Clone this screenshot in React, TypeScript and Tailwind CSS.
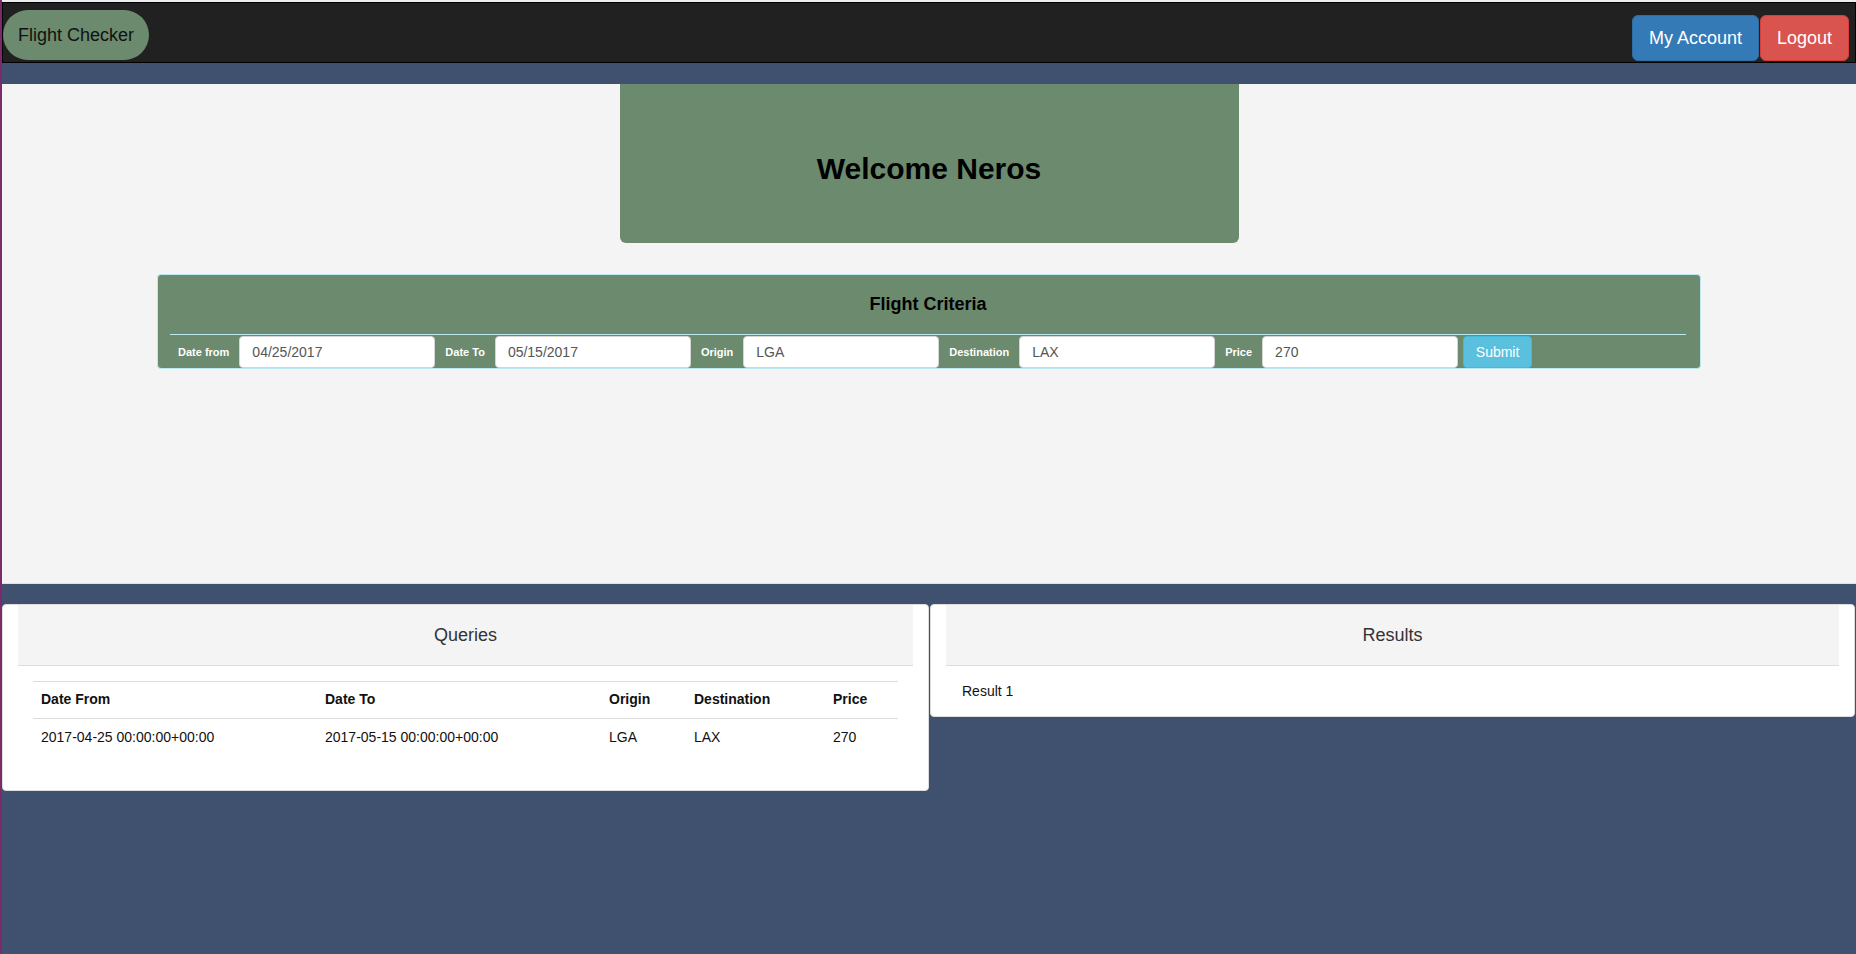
import React from "react";

const fields = [
  { label: "Date from", value: "04/25/2017" },
  { label: "Date To", value: "05/15/2017" },
  { label: "Origin", value: "LGA" },
  { label: "Destination", value: "LAX" },
  { label: "Price", value: "270" },
];

const queries = [
  {
    from: "2017-04-25 00:00:00+00:00",
    to: "2017-05-15 00:00:00+00:00",
    origin: "LGA",
    destination: "LAX",
    price: "270",
  },
];

function Navbar() {
  return (
    <div className="flex h-[61px] justify-between border border-black bg-[#212121]">
      <div className="mt-[7px] flex h-[50px] items-center rounded-full bg-[#6b8a6e] px-[15px] text-[18px] text-[#111]">
        Flight Checker
      </div>
      <div className="mt-[12px] flex gap-[1px] pr-[6px]">
        <button className="h-[46px] rounded-[6px] border border-[#2e6da4] bg-[#337ab7] px-[16px] text-[18px] text-white">
          My Account
        </button>
        <button className="h-[46px] rounded-[6px] border border-[#d43f3a] bg-[#d9534f] px-[16px] text-[18px] text-white">
          Logout
        </button>
      </div>
    </div>
  );
}

function CriteriaForm() {
  return (
    <div className="mx-auto mt-[31px] h-[95px] w-[1544px] rounded-[4px] border border-[#bce8f1] bg-[#6b8a6e] pl-[12px] pr-[14px]">
      <div className="flex h-[60px] items-center justify-center border-b border-[#bce8f1] text-[18px] font-bold text-black">
        Flight Criteria
      </div>
      <div className="mt-[1px] flex h-[32px] -ml-[2px]">
        {fields.map((f) => (
          <React.Fragment key={f.label}>
            <span className="flex items-center px-[10px] text-[11px] font-bold text-white">
              {f.label}
            </span>
            <input
              type="text"
              defaultValue={f.value}
              className="h-[32px] w-[196px] rounded-[4px] border border-[#d5d5d5] bg-white px-[12px] text-[14px] text-[#555] outline-none"
            />
          </React.Fragment>
        ))}
        <button className="ml-[5px] h-[32px] w-[69px] rounded-[4px] border border-[#46b8da] bg-[#5bc0de] text-[14px] text-white">
          Submit
        </button>
      </div>
    </div>
  );
}

function CardHeader({ title }: { title: string }) {
  return (
    <div className="flex h-[61px] items-center justify-center border-b border-[#ddd] bg-[#f4f4f4] text-[18px] text-[#333]">
      {title}
    </div>
  );
}

export default function App() {
  return (
    <div className="min-h-[954px] border-l-2 border-[#7b2a6b] bg-[#405170] font-['Liberation_Sans',Arial,sans-serif]">
      <div className="h-[2px] bg-[#eeeeee]" />
      <Navbar />

      <div className="mt-[21px] h-[500px] border-b border-[#e2e2e2] bg-[#f4f4f4]">
        <div className="mx-auto flex h-[159px] w-[619px] items-center justify-center rounded-b-[6px] bg-[#6b8a6e] pt-[9px] text-[30px] font-bold text-black">
          Welcome Neros
        </div>
        <CriteriaForm />
      </div>

      <div className="mt-[20px] flex items-start gap-[1px]">
        <div className="w-[927px] rounded-[4px] border border-[#ddd] bg-white px-[15px]">
          <CardHeader title="Queries" />
          <div className="px-[15px] pb-[35px] pt-[15px]">
            <table className="w-full border-collapse border-t border-[#ddd] text-left text-[14px] leading-[20px] text-[#111]">
              <thead>
                <tr className="border-b border-[#ddd]">
                  <th className="w-[284px] px-[8px] pb-[9px] pt-[7px] font-bold">Date From</th>
                  <th className="w-[284px] px-[8px] pb-[9px] pt-[7px] font-bold">Date To</th>
                  <th className="w-[85px] px-[8px] pb-[9px] pt-[7px] font-bold">Origin</th>
                  <th className="w-[139px] px-[8px] pb-[9px] pt-[7px] font-bold">Destination</th>
                  <th className="px-[8px] pb-[9px] pt-[7px] font-bold">Price</th>
                </tr>
              </thead>
              <tbody>
                {queries.map((q, i) => (
                  <tr key={i}>
                    <td className="p-[8px]">{q.from}</td>
                    <td className="p-[8px]">{q.to}</td>
                    <td className="p-[8px]">{q.origin}</td>
                    <td className="p-[8px]">{q.destination}</td>
                    <td className="p-[8px]">{q.price}</td>
                  </tr>
                ))}
              </tbody>
            </table>
          </div>
        </div>

        <div className="w-[925px] rounded-[4px] border border-[#ddd] bg-white px-[15px]">
          <CardHeader title="Results" />
          <div className="flex h-[50px] items-center pl-[16px] text-[14px] text-[#111]">
            Result 1
          </div>
        </div>
      </div>
    </div>
  );
}
